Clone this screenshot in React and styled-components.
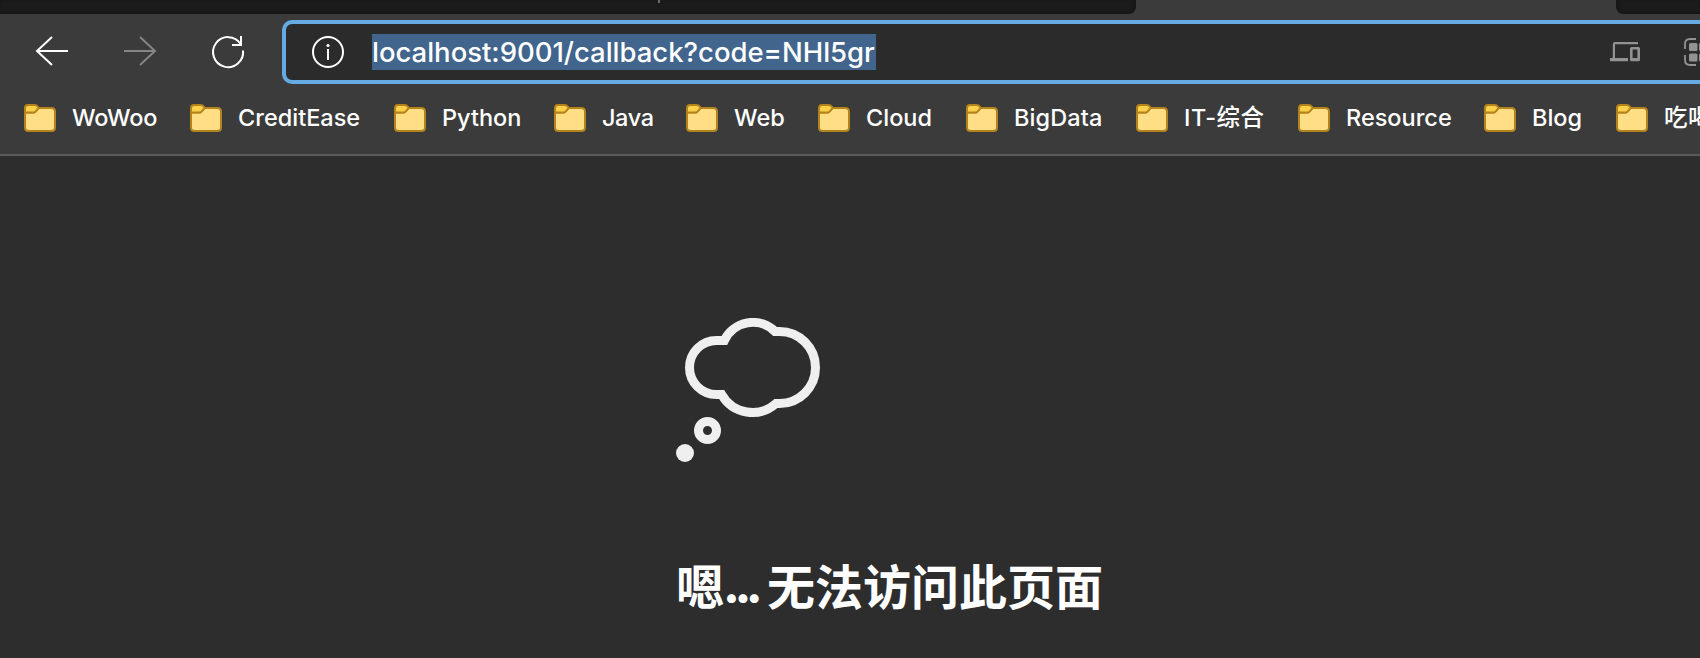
import React from "react";
import styled, { createGlobalStyle } from "styled-components";

const GlobalStyle = createGlobalStyle`
  * { box-sizing: border-box; }
  body {
    margin: 0;
    background: #2d2d2d;
    font-family: Inter, "Noto Sans CJK SC", sans-serif;
    color: #fff;
  }
`;

const Window = styled.div`
  display: flex;
  flex-direction: column;
  width: 100%;
  height: 100vh;
  overflow: hidden;
`;

const TabStrip = styled.div`
  display: flex;
  flex: none;
  height: 14px;
  background: #3b3b3b;
`;

const InactiveTabs = styled.div`
  display: flex;
  justify-content: flex-end;
  flex: none;
  width: 1136px;
  background: #1b1b1b;
  border-bottom-right-radius: 8px;
  box-shadow: inset -1px -1px 3px #131313;
`;

const TabDivider = styled.div`
  width: 2px;
  height: 3px;
  margin-right: 476px;
  background: #6b6b6b;
`;

const NextTab = styled.div`
  flex: 1;
  margin-left: 480px;
  background: #1b1b1b;
  border-bottom-left-radius: 8px;
  box-shadow: inset 1px -1px 3px #131313;
`;

const Toolbar = styled.div`
  display: flex;
  flex: none;
  height: 76px;
  padding-top: 6px;
  background: #3b3b3b;
`;

const NavButtons = styled.div`
  display: flex;
  flex: none;
  gap: 48px;
  width: 282px;
  padding: 12px 0 0 32px;
`;

const NavIcon = styled.svg`
  display: block;
  flex: none;
  width: 40px;
  height: 40px;
  fill: none;
  stroke: ${(p) => (p.$disabled ? "#858585" : "#fff")};
  stroke-width: 2;
`;

const AddressBar = styled.div`
  display: flex;
  align-items: center;
  flex: none;
  width: 1600px;
  height: 64px;
  padding-left: 22px;
  border: 4px solid #66aae3;
  border-radius: 10px;
  background: #2b2b2b;
`;

const InfoIcon = styled(NavIcon)`
  margin-right: 24px;
`;

const SelectedUrl = styled.span`
  width: 504px;
  height: 36px;
  background: #41658c;
  font-size: 27.5px;
  font-weight: 500;
  line-height: 36px;
  letter-spacing: -0.02px;
  white-space: pre;
`;

const DevicesIcon = styled.svg`
  display: block;
  flex: none;
  width: 30px;
  height: 20px;
  margin-left: 734px;
`;

const AppsIcon = styled.svg`
  display: block;
  flex: none;
  width: 32px;
  height: 28px;
  margin-left: 44px;
`;

const BookmarksBar = styled.div`
  display: flex;
  flex: none;
  gap: 34px;
  height: 66px;
  padding: 14px 0 0 24px;
  background: #3b3b3b;
  border-bottom: 2px solid #5b5b5b;
`;

const Bookmark = styled.div`
  display: flex;
  flex: none;
  gap: 16px;
  height: 28px;
`;

const FolderIcon = styled.svg`
  display: block;
  flex: none;
  width: 32px;
  height: 28px;
  stroke: #b5831c;
  stroke-width: 2;
`;

const BookmarkLabel = styled.span`
  width: ${(p) => p.$width}px;
  font-size: 23.5px;
  font-weight: 500;
  line-height: 28px;
  letter-spacing: ${(p) => p.$tracking || 0}px;
  white-space: nowrap;
`;

const Page = styled.main`
  flex: 1;
  padding: 162px 0 0 676px;
  background: #2d2d2d;
`;

const ThoughtCloud = styled.svg`
  display: block;
  width: 144px;
  height: 144px;
  fill: none;
  stroke: #efefef;
  stroke-width: 27;
`;

const Heading = styled.h1`
  display: flex;
  margin: 87px 0 0;
  font-family: "Noto Sans CJK SC", sans-serif;
  font-size: 48px;
  font-weight: 700;
  line-height: 70px;
  white-space: nowrap;
`;

const Ellipsis = styled.span`
  width: 43px;
  padding-top: 2px;
  font-family: Inter, sans-serif;
  font-weight: 800;
  letter-spacing: -5.5px;
  text-indent: -1px;
`;

const bookmarks = [
  { label: "WoWoo", width: 84, tracking: -0.2 },
  { label: "CreditEase", width: 122 },
  { label: "Python", width: 78 },
  { label: "Java", width: 50, tracking: -0.4 },
  { label: "Web", width: 50 },
  { label: "Cloud", width: 66 },
  { label: "BigData", width: 88, tracking: 0.1 },
  { label: "IT-综合", width: 80, tracking: 0.5 },
  { label: "Resource", width: 104 },
  { label: "Blog", width: 50 },
  { label: "吃喝玩乐", width: 96, tracking: 0.5 },
];

function Folder() {
  return (
    <FolderIcon viewBox="0 0 32 28">
      <path d="M1 5V23.5Q1 27 4.500 27H27.500Q31 27 31 23.500V7.500Q31 4 27.500 4H14.500L10 8.500H1Z" fill="#ffde85" />
      <path d="M1 8.500V4Q1 1 4 1H10.500Q12.500 1 14 2.800L14.800 4L11.800 7.300Q10.800 8.500 9.300 8.500Z" fill="#fbd04b" />
    </FolderIcon>
  );
}

export default function App() {
  return (
    <Window>
      <GlobalStyle />
      <TabStrip>
        <InactiveTabs>
          <TabDivider />
        </InactiveTabs>
        <NextTab />
      </TabStrip>
      <Toolbar>
        <NavButtons>
          <NavIcon viewBox="0 0 40 40">
            <path d="M36 19H5M20 5L5 19L20 33" />
          </NavIcon>
          <NavIcon viewBox="0 0 40 40" $disabled>
            <path d="M4 19H35M20 5L35 19L20 33" />
          </NavIcon>
          <NavIcon viewBox="0 0 40 40">
            <path d="M35 18.500A15 15 0 1 1 32.700 12M33 4V13H24" />
          </NavIcon>
        </NavButtons>
        <AddressBar>
          <InfoIcon viewBox="0 0 40 40">
            <circle cx="20" cy="20" r="15" />
            <path d="M20 17V28" />
            <circle cx="20" cy="13.500" r="1.600" fill="#fff" stroke="none" />
          </InfoIcon>
          <SelectedUrl>localhost:9001/callback?code=NHl5gr</SelectedUrl>
          <DevicesIcon viewBox="0 0 30 20" fill="#929292">
            <path d="M5 0H28V2.200H5V16H18V19.200H0V16H2.800V2.200Q2.800 0 5 0Z" />
            <path fillRule="evenodd" d="M21.500 5H28.500Q30 5 30 6.500V17.700Q30 19.200 28.500 19.200H21.500Q20 19.200 20 17.700V6.500Q20 5 21.500 5ZM22.600 7.600V16H27.400V7.600Z" />
          </DevicesIcon>
          <AppsIcon viewBox="0 0 32 28">
            <g fill="none" stroke="#929292" strokeWidth="1.800">
              <path d="M12 1H6Q1 1 1 6V11M1 17V22Q1 27 6 27H12" />
              <path d="M20 1H26Q31 1 31 6V11M31 17V22Q31 27 26 27H20" />
            </g>
            <g fill="#929292">
              <rect x="5" y="5" width="8.500" height="8" rx="1.500" />
              <rect x="5" y="15.500" width="8.500" height="8" rx="1.500" />
              <rect x="15" y="5" width="8.500" height="8" rx="1.500" />
              <rect x="15" y="15.500" width="8.500" height="8" rx="1.500" />
            </g>
          </AppsIcon>
        </AddressBar>
      </Toolbar>
      <BookmarksBar>
        {bookmarks.map((b) => (
          <Bookmark key={b.label}>
            <Folder />
            <BookmarkLabel $width={b.width} $tracking={b.tracking}>
              {b.label}
            </BookmarkLabel>
          </Bookmark>
        ))}
      </BookmarksBar>
      <Page>
        <ThoughtCloud viewBox="48 54 432 432">
          <path d="M193 121.500H169.500A81 81 0 0 0 169.500 283.500H185A106 106 0 0 0 348 310.500H358.500A108 108 0 0 0 358.500 94.500H345A94.500 94.500 0 0 0 193 121.500Z" />
          <circle cx="142.500" cy="391.500" r="27" />
          <circle cx="75" cy="459" r="27" fill="#efefef" stroke="none" />
        </ThoughtCloud>
        <Heading>
          嗯<Ellipsis>...</Ellipsis>无法访问此页面
        </Heading>
      </Page>
    </Window>
  );
}
